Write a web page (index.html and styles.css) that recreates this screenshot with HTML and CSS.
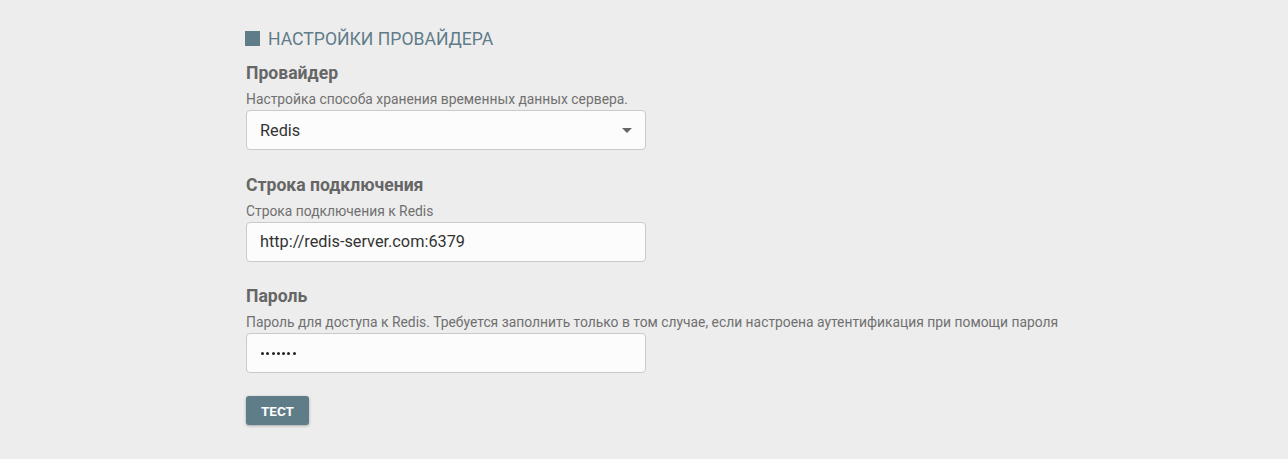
FILE: index.html
```html
<!DOCTYPE html>
<html lang="ru">
<head>
<meta charset="utf-8">
<title>Настройки провайдера</title>
<link rel="stylesheet" href="styles.css">
</head>
<body>
<div class="page">
  <div class="section-title">
    <span class="square"></span>
    <span class="title-text">НАСТРОЙКИ ПРОВАЙДЕРА</span>
  </div>

  <div class="group">
    <div class="label">Провайдер</div>
    <div class="desc">Настройка способа хранения временных данных сервера.</div>
    <div class="field select">
      <span class="value">Redis</span>
      <span class="caret"></span>
    </div>
  </div>

  <div class="group">
    <div class="label">Строка подключения</div>
    <div class="desc">Строка подключения к Redis</div>
    <div class="field"><span class="value">http://redis-server.com:6379</span></div>
  </div>

  <div class="group">
    <div class="label">Пароль</div>
    <div class="desc">Пароль для доступа к Redis. Требуется заполнить только в том случае, если настроена аутентификация при помощи пароля</div>
    <div class="field"><span class="dots"><i></i><i></i><i></i><i></i><i></i><i></i><i></i></span></div>
  </div>

  <button class="btn">ТЕСТ</button>
</div>
</body>
</html>
```

FILE: styles.css
```css
html, body {
  margin: 0;
  padding: 0;
  background: #ededed;
}
body {
  font-family: Roboto, "Noto Sans", "Liberation Sans", sans-serif;
  color: #666666;
}
.page {
  padding: 28px 0 0 245px;
  height: 431px;
}
.section-title {
  display: flex;
  align-items: center;
  gap: 8px;
  height: 22px;
  margin-bottom: 12px;
}
.square {
  width: 15px;
  height: 15px;
  background: #5f7c89;
  margin-top: -1px;
}
.title-text {
  font-size: 17.6px;
  line-height: 22px;
  color: #5f7c89;
}
.group {
  padding-left: 1px;
  margin-bottom: 23.5px;
}
.label {
  font-size: 17.6px;
  font-weight: 700;
  line-height: 22px;
  color: #666666;
  margin-bottom: 7px;
}
.desc {
  font-size: 13.85px;
  line-height: 16px;
  color: #707070;
  margin-bottom: 3px;
  white-space: nowrap;
}
.field {
  box-sizing: border-box;
  width: 400px;
  height: 40px;
  border: 1px solid #cacaca;
  border-radius: 4px;
  background: #fcfcfc;
  display: flex;
  align-items: center;
  padding: 0 13px;
  font-size: 16.3px;
  color: #333333;
}
.select {
  justify-content: space-between;
}
.caret {
  width: 0;
  height: 0;
  border-left: 5px solid transparent;
  border-right: 5px solid transparent;
  border-top: 5px solid #666666;
}
.dots {
  display: flex;
  gap: 2.3px;
  margin-left: 1px;
}
.dots i {
  display: block;
  width: 3px;
  height: 3px;
  border-radius: 50%;
  background: #222222;
}
.btn {
  margin: -0.5px 0 0 1px;
  height: 29px;
  padding: 0 15px;
  border: none;
  border-radius: 3px;
  background: #5f7c89;
  color: #ffffff;
  font-family: Roboto, "Noto Sans", "Liberation Sans", sans-serif;
  font-size: 13.5px;
  font-weight: 700;
  box-shadow: 0 1px 3px rgba(0,0,0,0.3);
  cursor: pointer;
}
```
